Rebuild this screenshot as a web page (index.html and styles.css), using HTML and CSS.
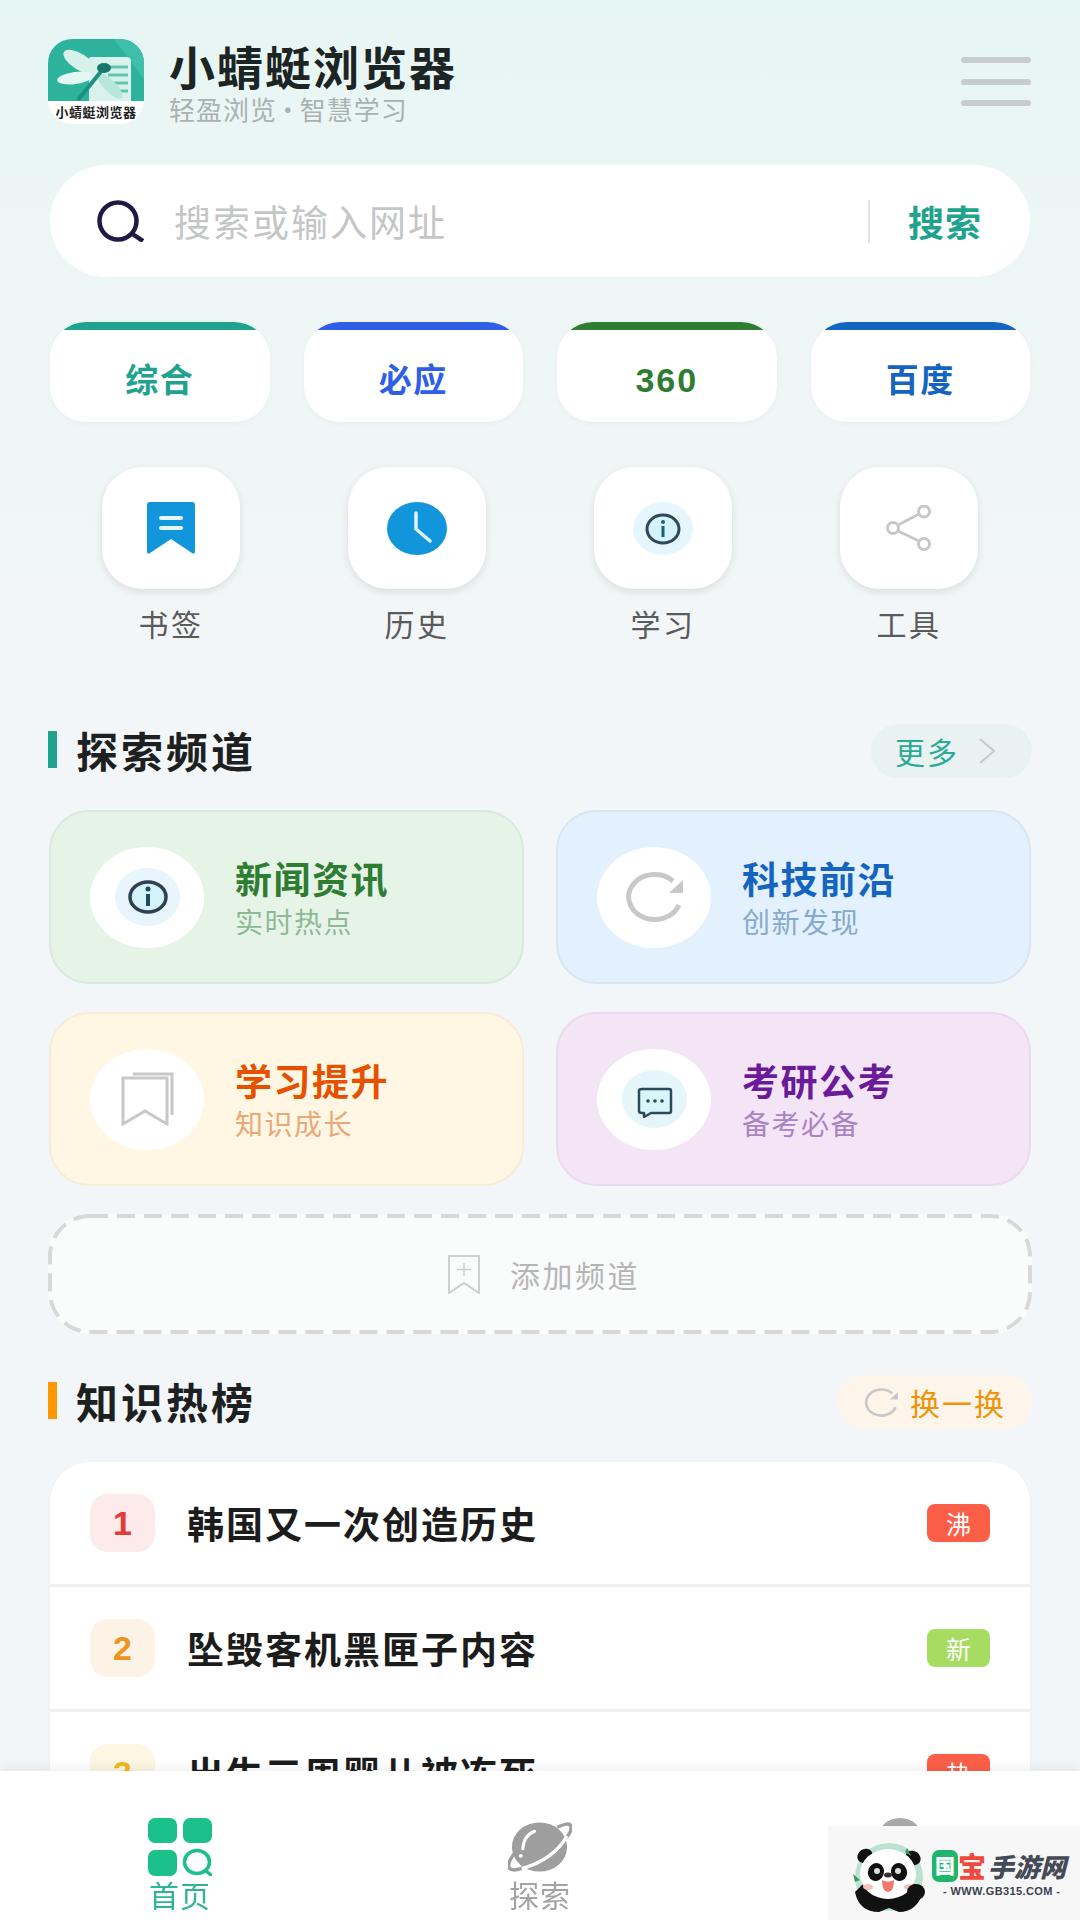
FILE: index.html
```html
<!DOCTYPE html>
<html lang="zh-CN">
<head>
    <meta charset="UTF-8">
    <meta name="viewport" content="width=device-width, initial-scale=1.0">
    <title>小蜻蜓浏览器</title>
    <link rel="stylesheet" href="styles.css">
</head>
<body>
    <div class="page">
        <div class="header">
            <div class="logo">
                <svg class="logo-art" viewBox="0 0 96 62" preserveAspectRatio="none">
                    <rect width="96" height="62" fill="#2db39c"/>
                    <path d="M66 0 H96 V40 Z" fill="#3fbfa9"/>
                    <path d="M41 20 Q41 18 43 18 H78 Q83 18 83 22 V62 H41 Z" fill="#d9f3ec"/>
                    <path d="M58 28 H80 M60 36 H80 M62 44 H80 M64 52 H80" stroke="#62c5b0" stroke-width="3"/>
                    <ellipse cx="32" cy="23" rx="19" ry="8" transform="rotate(32 32 23)" fill="#d5f1ea"/>
                    <ellipse cx="27" cy="39" rx="18" ry="6" transform="rotate(-8 27 39)" fill="#e4f7f2"/>
                    <ellipse cx="62" cy="47" rx="17" ry="6" transform="rotate(45 62 47)" fill="#b8e6db"/>
                    <path d="M55 30 L30 61" stroke="#1b9080" stroke-width="4"/>
                    <ellipse cx="56" cy="29" rx="7" ry="5" fill="#14796a"/>
                </svg>
                <div class="logo-name">小蜻蜓浏览器</div>
            </div>
            <div class="brand">
                <div class="brand-title">小蜻蜓浏览器</div>
                <div class="brand-sub">轻盈浏览 · 智慧学习</div>
            </div>
            <div class="menu"><span></span><span></span><span></span></div>
        </div>

        <div class="search">
            <svg class="search-icon" viewBox="0 0 48 42"><circle cx="22" cy="21" r="18.5" fill="none" stroke="#1f1a45" stroke-width="4.5"/><path d="M35 33 L47 41" stroke="#1f1a45" stroke-width="4.5"/></svg>
            <div class="search-text">搜索或输入网址</div>
            <div class="search-line"></div>
            <div class="search-btn">搜索</div>
        </div>

        <div class="engines">
            <div class="engine teal">综合</div>
            <div class="engine blue">必应</div>
            <div class="engine green num">360</div>
            <div class="engine navy">百度</div>
        </div>

        <div class="quick">
            <div class="quick-item">
                <div class="quick-box">
                    <svg class="ico-mark" viewBox="0 0 48 52"><path d="M3 0 H45 Q48 0 48 3 V49 Q48 53 45 51 L24 37 L3 51 Q0 53 0 49 V3 Q0 0 3 0 Z" fill="#1296db"/><rect x="12" y="14" width="24" height="4" rx="2" fill="#e4f5ff"/><rect x="12" y="24" width="24" height="4" rx="2" fill="#e4f5ff"/></svg>
                </div>
                <div class="quick-label">书签</div>
            </div>
            <div class="quick-item">
                <div class="quick-box">
                    <svg class="ico-clock" viewBox="0 0 60 53"><ellipse cx="30" cy="26.5" rx="30" ry="26.5" fill="#1296db"/><path d="M29 11 V27 L43 39" fill="none" stroke="#e0f3ff" stroke-width="3.5" stroke-linecap="round"/></svg>
                </div>
                <div class="quick-label">历史</div>
            </div>
            <div class="quick-item">
                <div class="quick-box">
                    <svg class="ico-info" viewBox="0 0 60 53"><ellipse cx="30" cy="26.5" rx="30" ry="26.5" fill="#e6f6fd"/><ellipse cx="30" cy="27" rx="16" ry="14" fill="#d4f2fa" stroke="#2f4858" stroke-width="3"/><circle cx="30" cy="20" r="2" fill="#1f5f70"/><rect x="28.5" y="24" width="3" height="11" fill="#1f5f70"/></svg>
                </div>
                <div class="quick-label">学习</div>
            </div>
            <div class="quick-item">
                <div class="quick-box">
                    <svg class="ico-share" viewBox="0 0 46 46"><path d="M12 20 L33 9 M12 26 L33 36" stroke="#c8c8c8" stroke-width="3"/><circle cx="7" cy="23" r="5.5" fill="none" stroke="#c8c8c8" stroke-width="3"/><circle cx="38" cy="6.5" r="5.5" fill="none" stroke="#c8c8c8" stroke-width="3"/><circle cx="38" cy="39" r="5.5" fill="none" stroke="#c8c8c8" stroke-width="3"/></svg>
                </div>
                <div class="quick-label">工具</div>
            </div>
        </div>

        <div class="sec-head sec-explore">
            <div class="sec-title"><span class="sec-bar teal-bar"></span>探索频道</div>
            <div class="pill pill-more">更多<svg class="ico-chevron" viewBox="0 0 16 26"><path d="M1 1 L15 13 L1 25" fill="none" stroke="#c8c8c8" stroke-width="2"/></svg></div>
        </div>

        <div class="channels">
            <div class="channel c-green">
                <div class="channel-ico">
                    <svg class="ico-big" viewBox="0 0 65 58"><ellipse cx="32.5" cy="29" rx="32.5" ry="29" fill="#e8f5fc"/><ellipse cx="33" cy="29" rx="18" ry="15" fill="#d4f2fa" stroke="#2f4050" stroke-width="3.5"/><circle cx="33" cy="21" r="2.5" fill="#1f4a58"/><rect x="31" y="26" width="4" height="12" fill="#1f4a58"/></svg>
                </div>
                <div><div class="channel-name">新闻资讯</div><div class="channel-sub">实时热点</div></div>
            </div>
            <div class="channel c-blue">
                <div class="channel-ico">
                    <svg class="ico-refresh" viewBox="0 0 58 50"><path d="M54 33 A26 22.5 0 1 1 48 9" fill="none" stroke="#c8c8c8" stroke-width="5"/><path d="M58 8 V21 H44 Z" fill="#c8c8c8"/></svg>
                </div>
                <div><div class="channel-name">科技前沿</div><div class="channel-sub">创新发现</div></div>
            </div>
            <div class="channel c-orange">
                <div class="channel-ico">
                    <svg class="ico-books" viewBox="0 0 53 54"><path d="M2 6 H46 V52 L24 39 L2 52 Z" fill="none" stroke="#c8c8c8" stroke-width="3"/><path d="M12 2 H51 V43" fill="none" stroke="#c8c8c8" stroke-width="3"/></svg>
                </div>
                <div><div class="channel-name">学习提升</div><div class="channel-sub">知识成长</div></div>
            </div>
            <div class="channel c-purple">
                <div class="channel-ico">
                    <svg class="ico-big" viewBox="0 0 65 58"><ellipse cx="32.5" cy="29" rx="32.5" ry="29" fill="#e4f6fa"/><path d="M20 19 H47 Q49 19 49 21 V41 Q49 43 47 43 H29 L22 47 V43 H20 Q17 43 17 41 V21 Q17 19 20 19 Z" fill="#d9f5fa" stroke="#2f4858" stroke-width="2.5" stroke-linejoin="round"/><circle cx="26" cy="31" r="1.8" fill="#2f4858"/><circle cx="33" cy="31" r="1.8" fill="#2f4858"/><circle cx="40" cy="31" r="1.8" fill="#2f4858"/></svg>
                </div>
                <div><div class="channel-name">考研公考</div><div class="channel-sub">备考必备</div></div>
            </div>
        </div>

        <div class="add-channel">
            <svg class="add-border" viewBox="0 0 984 120"><rect x="2" y="2" width="980" height="116" rx="40" fill="none" stroke="#d8d8d8" stroke-width="4" stroke-dasharray="18 9"/></svg>
            <svg class="ico-addmark" viewBox="0 0 32 39"><path d="M1 1 H31 V38 L16 28 L1 38 Z" fill="none" stroke="#cfcfcf" stroke-width="2"/><path d="M16 8 V21 M9 14.5 H23" stroke="#cfcfcf" stroke-width="1.5"/></svg>
            <span>添加频道</span>
        </div>

        <div class="sec-head sec-hot">
            <div class="sec-title"><span class="sec-bar orange-bar"></span>知识热榜</div>
            <div class="pill pill-swap"><svg class="ico-swap" viewBox="0 0 58 50" preserveAspectRatio="none"><path d="M54 33 A26 22.5 0 1 1 48 9" fill="none" stroke="#c8c8c8" stroke-width="4.5"/><path d="M58 7 V20 H44 Z" fill="#c8c8c8"/></svg>换一换</div>
        </div>

        <div class="hot-list">
            <div class="hot-row">
                <div class="rank rank-1">1</div>
                <div class="hot-text">韩国又一次创造历史</div>
                <div class="tag tag-red">沸</div>
            </div>
            <div class="hot-row">
                <div class="rank rank-2">2</div>
                <div class="hot-text">坠毁客机黑匣子内容</div>
                <div class="tag tag-green">新</div>
            </div>
            <div class="hot-row">
                <div class="rank rank-3">3</div>
                <div class="hot-text">出生三周婴儿被冻死</div>
                <div class="tag tag-red">热</div>
            </div>
        </div>
    </div>

    <div class="nav">
        <div class="nav-item active">
            <svg class="nav-ico" viewBox="0 0 64 58"><rect width="29" height="25" rx="7" fill="#1cc08a"/><rect x="35" width="29" height="25" rx="7" fill="#1cc08a"/><rect y="32" width="29" height="26" rx="7" fill="#1cc08a"/><ellipse cx="49" cy="44" rx="12.5" ry="11.5" fill="none" stroke="#1cc08a" stroke-width="3.5"/><path d="M57 52 L64 58" stroke="#1cc08a" stroke-width="3.5"/></svg>
            <div>首页</div>
        </div>
        <div class="nav-item">
            <svg class="nav-ico" viewBox="0 0 65 58">
                <ellipse cx="32" cy="29" rx="28" ry="25" fill="#9e9e9e"/>
                <path d="M50 9 Q63 3 64 8 Q65 13 59 20" fill="none" stroke="#9e9e9e" stroke-width="3.5"/>
                <path d="M6 36 Q-2 47 2 51 Q6 54 16 50" fill="none" stroke="#9e9e9e" stroke-width="3.5"/>
                <path d="M14 51 Q46 42 60 18" fill="none" stroke="#fff" stroke-width="3.5"/>
                <path d="M15 31 Q16 17 27 13" fill="none" stroke="#fff" stroke-width="3" stroke-linecap="round"/>
                <circle cx="13" cy="38" r="2" fill="#fff"/>
            </svg>
            <div>探索</div>
        </div>
        <div class="nav-item">
            <div class="nav-avatar"></div>
        </div>
    </div>

    <div class="watermark">
        <svg class="panda" viewBox="0 0 76 72">
            <circle cx="38" cy="35" r="34" fill="#b9e2d0"/>
            <path d="M4 50 Q8 70 28 70 L38 66 L48 70 Q66 70 72 50 L64 42 H12 Z" fill="#111"/>
            <ellipse cx="14" cy="14" rx="8" ry="7" transform="rotate(-35 14 14)" fill="#111"/>
            <ellipse cx="62" cy="16" rx="8" ry="7" transform="rotate(35 62 16)" fill="#111"/>
            <ellipse cx="37" cy="32" rx="28" ry="25" fill="#fff"/>
            <ellipse cx="25" cy="30" rx="8" ry="9" transform="rotate(20 25 30)" fill="#111"/>
            <ellipse cx="48" cy="30" rx="8" ry="9" transform="rotate(-20 48 30)" fill="#111"/>
            <circle cx="26" cy="29" r="3" fill="#ddd"/><circle cx="47" cy="29" r="3" fill="#ddd"/>
            <ellipse cx="37" cy="33" rx="4" ry="2.5" fill="#333"/>
            <path d="M31 38 Q37 41 43 38 Q43 50 37 50 Q31 50 31 38 Z" fill="#f2776c"/>
            <ellipse cx="17" cy="45" rx="5" ry="3" fill="#f8c0b8"/><ellipse cx="58" cy="45" rx="5" ry="3" fill="#f8c0b8"/>
            <ellipse cx="65" cy="50" rx="9" ry="8" fill="#111"/>
            <path d="M56 6 L60 14 L54 10 Z M2 32 L9 38 L4 40 Z" fill="#3f9a5a"/>
        </svg>
        <div class="wm-text">
            <div class="wm-name"><span class="wm-guo">国</span><span class="wm-bao">宝</span><span class="wm-rest">手游网</span></div>
            <div class="wm-url">- WWW.GB315.COM -</div>
        </div>
    </div>
</body>
</html>
```

FILE: styles.css
```css
* {
    box-sizing: border-box;
}
body {
    margin: 0;
    height: 1920px;
    overflow: hidden;
    font-family: "Noto Sans CJK SC", "Noto Sans", sans-serif;
    background: linear-gradient(180deg, #e6f6f3 0%, #eef6f5 300px, #f3f6f8 720px, #f3f6f8 100%);
    color: #1c1c1c;
}
.page {
    padding: 39px 48px 0;
    height: 1771px;
    overflow: hidden;
}

/* header */
.header {
    display: flex;
    align-items: center;
    height: 85px;
}
.logo {
    width: 96px;
    height: 85px;
    border-radius: 24px;
    overflow: hidden;
    background: #fff;
    flex-shrink: 0;
}
.logo-art {
    display: block;
    width: 96px;
    height: 62px;
}
.logo-name {
    font-size: 13px;
    font-weight: 700;
    line-height: 21px;
    text-align: center;
    color: #222;
    letter-spacing: 0.5px;
}
.brand {
    margin-left: 25px;
    padding-top: 1px;
    flex: 1;
}
.brand-title {
    font-size: 46px;
    font-weight: 700;
    line-height: 50px;
    letter-spacing: 2px;
    color: #1d2424;
}
.brand-sub {
    margin-top: 3px;
    font-size: 26px;
    line-height: 32px;
    letter-spacing: 1px;
    word-spacing: -9px;
    color: #a9b1b1;
}
.menu {
    display: flex;
    flex-direction: column;
    gap: 15.5px;
    width: 70px;
    margin-right: 1px;
}
.menu span {
    height: 6px;
    border-radius: 3px;
    background: #c9cccc;
}

/* search */
.search {
    display: flex;
    align-items: center;
    height: 112px;
    margin: 41px 2px 0;
    padding: 0 48px 0 46px;
    border-radius: 56px;
    background: #fff;
}
.search-icon {
    width: 48px;
    height: 42px;
}
.search-text {
    flex: 1;
    margin-left: 30px;
    font-size: 37px;
    letter-spacing: 2px;
    color: #c4c6c6;
}
.search-line {
    width: 2px;
    height: 43px;
    background: #e2e2e2;
}
.search-btn {
    margin-left: 38px;
    font-size: 36px;
    font-weight: 700;
    letter-spacing: 1px;
    color: #1fa38f;
}

/* engine tabs */
.engines {
    display: grid;
    grid-template-columns: repeat(4, 1fr);
    gap: 34px;
    margin: 45px 2px 0;
}
.engine {
    position: relative;
    height: 100px;
    padding-top: 14px;
    border-radius: 36px;
    overflow: hidden;
    background: #fff;
    font-size: 33px;
    font-weight: 700;
    letter-spacing: 1.5px;
    line-height: 84px;
    text-align: center;
    box-shadow: 0 2px 6px rgba(0, 0, 0, 0.03);
}
.engine::before {
    content: "";
    position: absolute;
    left: 0;
    right: 0;
    top: 0;
    height: 8px;
    background: currentColor;
}
.engine.num {
    padding-top: 16px;
    font-family: "Liberation Sans", sans-serif;
    font-size: 34px;
    letter-spacing: 2px;
}
.teal { color: #1fa38f; }
.blue { color: #2f5fe8; }
.green { color: #2e7d32; }
.navy { color: #1565c0; }

/* quick entries */
.quick {
    display: grid;
    grid-template-columns: repeat(4, 246px);
    margin-top: 45px;
}
.quick-box {
    display: flex;
    align-items: center;
    justify-content: center;
    width: 138px;
    height: 122px;
    margin: 0 auto;
    border-radius: 40px;
    background: #fff;
    box-shadow: 0 3px 8px rgba(0, 0, 0, 0.1);
}
.quick-label {
    margin-top: 12px;
    font-size: 30px;
    line-height: 44px;
    letter-spacing: 2.5px;
    text-align: center;
    color: #5a5a5a;
}
.ico-mark { width: 48px; height: 52px; }
.ico-clock, .ico-info { width: 60px; height: 53px; }
.ico-share { width: 46px; height: 46px; }

/* section heads */
.sec-head {
    display: flex;
    align-items: center;
    justify-content: space-between;
    height: 54px;
}
.sec-explore { margin-top: 79px; }
.sec-hot { margin-top: 41px; }
.sec-title {
    display: flex;
    align-items: center;
    padding-bottom: 3px;
    font-size: 42px;
    font-weight: 700;
    letter-spacing: 3px;
    color: #1d2020;
}
.sec-bar {
    width: 9px;
    height: 37px;
    margin-right: 19px;
}
.teal-bar { background: #1fa38f; }
.orange-bar { background: #ff9800; }
.pill {
    display: flex;
    align-items: center;
    height: 54px;
    border-radius: 27px;
    font-size: 30px;
    letter-spacing: 2px;
}
.pill-more {
    width: 161px;
    padding-left: 24px;
    background: #e9f2f1;
    color: #2aaa97;
}
.ico-chevron {
    width: 16px;
    height: 26px;
    margin-left: 20px;
}
.pill-swap {
    width: 195px;
    padding-left: 27px;
    background: #fdf5ea;
    color: #f0930a;
}
.ico-swap {
    width: 34px;
    height: 29px;
    margin-right: 12px;
}

/* channels */
.channels {
    display: grid;
    grid-template-columns: repeat(2, 475px);
    grid-auto-rows: 174px;
    gap: 28px 32px;
    margin: 32px 0 0 1px;
}
.channel {
    display: flex;
    align-items: center;
    padding-left: 39px;
    border: 2px solid;
    border-radius: 40px;
}
.channel-ico {
    display: flex;
    align-items: center;
    justify-content: center;
    width: 114px;
    height: 101px;
    margin-right: 31px;
    border-radius: 50%;
    background: #fff;
    flex-shrink: 0;
}
.ico-big { width: 65px; height: 58px; }
.ico-refresh { width: 58px; height: 50px; }
.ico-books { width: 53px; height: 54px; }
.channel-name {
    font-size: 37px;
    font-weight: 700;
    line-height: 44px;
    letter-spacing: 1.5px;
}
.channel-sub {
    margin-top: 3px;
    font-size: 28px;
    line-height: 36px;
    letter-spacing: 1.5px;
}
.c-green { background: #e6f4e8; border-color: #d9e9dd; }
.c-green .channel-name { color: #2e7d32; }
.c-green .channel-sub { color: #8fb896; }
.c-blue { background: #e2f1fd; border-color: #d6e6f4; }
.c-blue .channel-name { color: #1565c0; }
.c-blue .channel-sub { color: #86a9cc; }
.c-orange { background: #fff7e3; border-color: #f6ecd8; }
.c-orange .channel-name { color: #e65100; }
.c-orange .channel-sub { color: #eaa878; }
.c-purple { background: #f3e5f6; border-color: #e9dbed; }
.c-purple .channel-name { color: #6a1b9a; }
.c-purple .channel-sub { color: #a983c4; }

/* add channel */
.add-channel {
    position: relative;
    display: flex;
    align-items: center;
    justify-content: center;
    height: 120px;
    margin-top: 28px;
    padding-left: 8px;
    border-radius: 40px;
    background: #fafbfb;
    font-size: 30px;
    letter-spacing: 2.5px;
    color: #b5b5b5;
}
.add-border {
    position: absolute;
    left: 0;
    top: 0;
    width: 984px;
    height: 120px;
}
.ico-addmark {
    width: 32px;
    height: 39px;
    margin-right: 30px;
}

/* hot list */
.hot-list {
    margin: 33px 2px 0;
    border-radius: 40px 40px 0 0;
    overflow: hidden;
    background: #fff;
    box-shadow: 0 1px 4px rgba(0, 0, 0, 0.04);
}
.hot-row {
    display: flex;
    align-items: center;
    height: 125px;
    padding: 0 40px;
    border-bottom: 3px solid #eef0f2;
}
.rank {
    width: 65px;
    height: 58px;
    border-radius: 18px;
    font-family: "Liberation Sans", sans-serif;
    font-size: 34px;
    font-weight: 700;
    line-height: 58px;
    text-align: center;
}
.rank-1 { background: #fdeaea; color: #e53935; }
.rank-2 { background: #fdf2e6; color: #f0921e; }
.rank-3 { background: #fdf6e3; color: #f2b61d; }
.hot-text {
    flex: 1;
    margin-left: 32px;
    font-size: 37px;
    font-weight: 700;
    letter-spacing: 2px;
    color: #1c1c1c;
}
.tag {
    width: 63px;
    height: 38px;
    border-radius: 8px;
    font-size: 25px;
    line-height: 38px;
    text-align: center;
    color: #fff;
}
.tag-red { background: #fb5f48; }
.tag-green { background: #a6dc62; }

/* bottom nav */
.nav {
    position: fixed;
    left: 0;
    right: 0;
    bottom: 0;
    display: grid;
    grid-template-columns: repeat(3, 1fr);
    height: 149px;
    padding-top: 47px;
    background: #fff;
    box-shadow: 0 -4px 10px rgba(0, 0, 0, 0.06);
}
.nav-item {
    display: flex;
    flex-direction: column;
    align-items: center;
    font-size: 30px;
    line-height: 36px;
    letter-spacing: 1px;
    color: #a3a3a3;
}
.nav-item.active {
    color: #2db598;
}
.nav-ico {
    width: 64px;
    height: 58px;
}
.nav-avatar {
    width: 44px;
    height: 40px;
    border-radius: 50%;
    background: #a8a8a8;
}

/* watermark over the nav */
.watermark {
    position: fixed;
    right: 0;
    bottom: 0;
    display: flex;
    align-items: center;
    width: 252px;
    height: 94px;
    padding-left: 23px;
    background: #f7f7f7;
}
.panda {
    width: 76px;
    height: 72px;
    margin-top: 10px;
    flex-shrink: 0;
}
.wm-text {
    margin-left: 5px;
}
.wm-name {
    display: flex;
    align-items: center;
    font-weight: 900;
    line-height: 32px;
}
.wm-guo {
    width: 26px;
    height: 32px;
    border-radius: 7px;
    background: #1fb56c;
    color: #fff;
    font-size: 20px;
    text-align: center;
}
.wm-bao {
    font-size: 28px;
    color: #ee4a3f;
}
.wm-rest {
    margin-left: 2px;
    font-size: 26px;
    font-style: italic;
    color: #454a57;
}
.wm-url {
    margin: 3px 0 0 11px;
    font-family: "Liberation Sans", sans-serif;
    font-size: 11px;
    font-weight: 700;
    line-height: 12px;
    letter-spacing: 0.4px;
    white-space: nowrap;
    color: #3c4250;
}
```
